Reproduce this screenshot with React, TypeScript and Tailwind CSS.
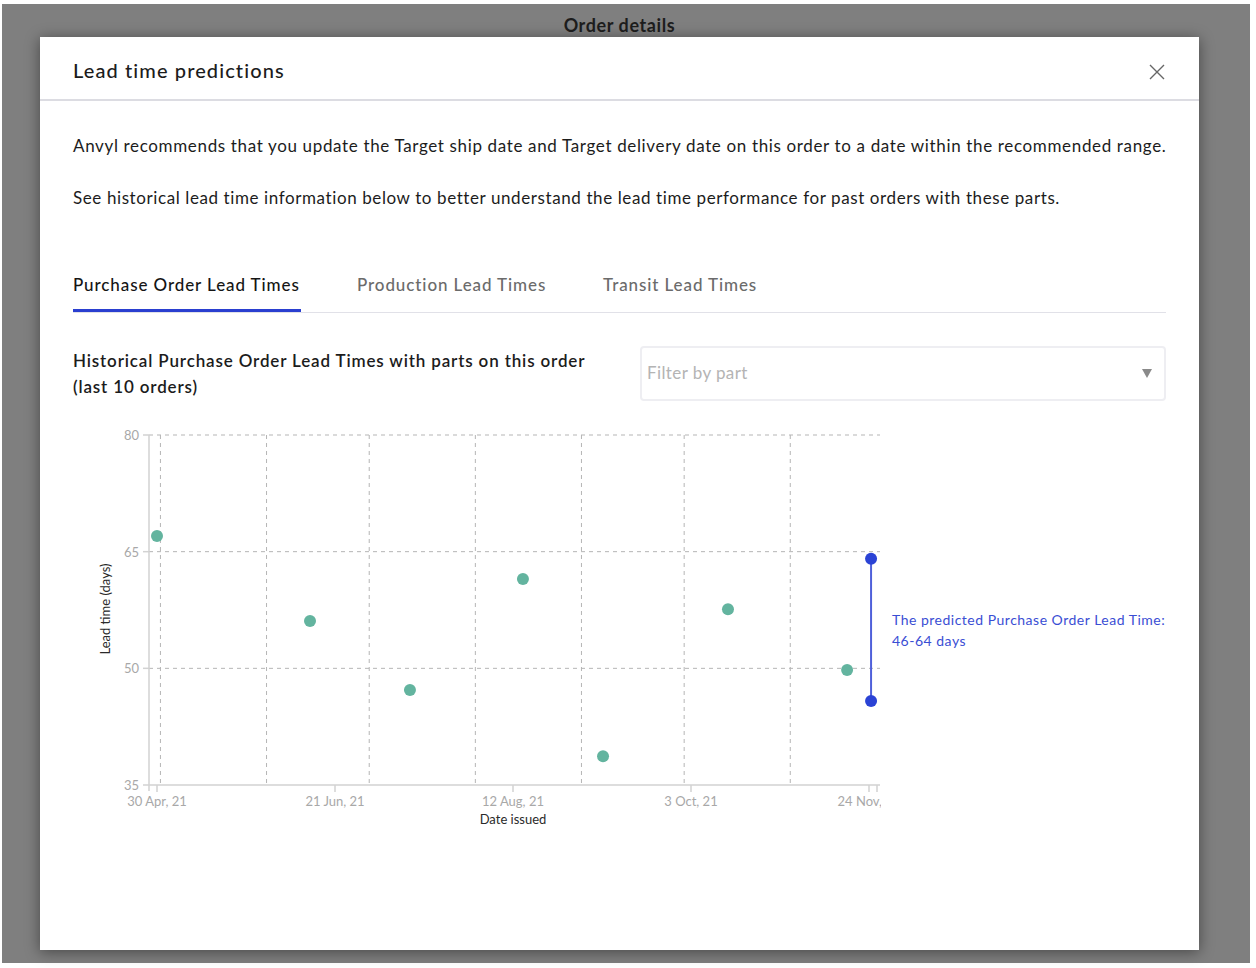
import React from "react";

// Historical purchase order lead times, in days from 30 Apr 2021
const orders = [
  { day: 0, lead: 67 },
  { day: 44.7, lead: 56.1 },
  { day: 73.9, lead: 47.2 },
  { day: 106.9, lead: 61.5 },
  { day: 130.3, lead: 38.7 },
  { day: 166.8, lead: 57.6 },
  { day: 201.6, lead: 49.8 },
];

const xTicks = [
  { day: 0, label: "30 Apr, 21" },
  { day: 52, label: "21 Jun, 21" },
  { day: 104, label: "12 Aug, 21" },
  { day: 156, label: "3 Oct, 21" },
  { day: 208, label: "24 Nov, 21" },
];

// first day of each month
const monthLines = [1, 32, 62, 93, 124, 154, 185];
const yTicks = [80, 65, 50, 35];

const px = (day: number) => 157 + day * 3.4231;
const py = (lead: number) => 785 - (lead - 35) * (350 / 45);

const font = { fontFamily: "Lato, 'Noto Sans', sans-serif" };

function LeadTimeChart() {
  const prediction = { day: 208.6, min: 45.8, max: 64.1 };
  return (
    <div className="flex mt-[19px]">
      <svg width={808} height={410} viewBox="73 420 808 410" style={font}>
        {/* grid */}
        {yTicks.slice(0, 3).map((v) => (
          <line key={v} x1={149} x2={880} y1={py(v)} y2={py(v)} stroke="#b5b5b5" strokeDasharray="4 4" />
        ))}
        {monthLines.map((d) => (
          <line key={d} x1={px(d)} x2={px(d)} y1={435} y2={785} stroke="#b5b5b5" strokeDasharray="4 4" />
        ))}

        {/* axes */}
        <line x1={149} x2={149} y1={435} y2={791} stroke="#d2d2d2" strokeWidth={1.5} />
        <line x1={149} x2={880} y1={785} y2={785} stroke="#d2d2d2" strokeWidth={1.5} />
        {yTicks.map((v) => (
          <g key={v}>
            <line x1={143} x2={149} y1={py(v)} y2={py(v)} stroke="#d2d2d2" strokeWidth={1.5} />
            <text x={139} y={py(v)} textAnchor="end" dominantBaseline="central" fontSize={13} fill="#a8a8a8">
              {v}
            </text>
          </g>
        ))}
        {xTicks.map((t) => (
          <g key={t.label}>
            <line x1={px(t.day)} x2={px(t.day)} y1={785} y2={792} stroke="#d2d2d2" strokeWidth={1.5} />
            <text x={px(t.day)} y={801} textAnchor="middle" dominantBaseline="central" fontSize={13} fill="#a8a8a8">
              {t.label}
            </text>
          </g>
        ))}
        <line x1={877} x2={877} y1={785} y2={792} stroke="#d2d2d2" strokeWidth={1.5} />

        <text
          x={105}
          y={609}
          textAnchor="middle"
          dominantBaseline="central"
          fontSize={13}
          fill="#2a2a2a"
          transform="rotate(-90 105 609)"
        >
          Lead time (days)
        </text>
        <text x={513} y={819} textAnchor="middle" dominantBaseline="central" fontSize={13} fill="#2a2a2a">
          Date issued
        </text>

        {/* past orders */}
        {orders.map((o, i) => (
          <circle key={i} cx={px(o.day)} cy={py(o.lead)} r={6} fill="#63b49f" />
        ))}

        {/* predicted range */}
        <line
          x1={px(prediction.day)}
          x2={px(prediction.day)}
          y1={py(prediction.max)}
          y2={py(prediction.min)}
          stroke="#4f60da"
          strokeWidth={2}
        />
        <circle cx={px(prediction.day)} cy={py(prediction.max)} r={6} fill="#2b43d5" />
        <circle cx={px(prediction.day)} cy={py(prediction.min)} r={6} fill="#2b43d5" />
      </svg>
      <div className="ml-[11px] mt-[189px] text-[14px] leading-[21px] text-[#3a4ed4] whitespace-nowrap tracking-[0.5px]">
        <div>The predicted Purchase Order Lead Time:</div>
        <div>46-64 days</div>
      </div>
    </div>
  );
}

export default function App() {
  const tabs = [
    { label: "Purchase Order Lead Times", width: "w-[228px]", active: true },
    { label: "Production Lead Times", width: "w-[190px]", active: false },
    { label: "Transit Lead Times", width: "w-[160px]", active: false },
  ];

  return (
    <div className="h-[968px] bg-white pt-[4px] pl-[2px] pr-[6px]" style={font}>
      <div className="h-[959px] bg-[#7f7f7f] pl-[38px]">
        <div className="w-[1159px]">
          <div className="pt-[10px] text-center text-[18px] leading-[23px] font-bold text-[#1c1c1c] tracking-[0.6px]">
            Order details
          </div>

          <div className="h-[913px] bg-white shadow-[0_2px_14px_rgba(0,0,0,0.45)]">
            {/* header */}
            <div className="h-[64px] flex items-center justify-between pl-[33px] pr-[33px] border-b-2 border-[#dcdce2]">
              <h2 className="text-[20px] font-medium text-[#1c1c1c] tracking-[1.1px] pt-[3px]">Lead time predictions</h2>
              <button className="w-[18px] h-[18px] flex items-center justify-center mt-[7px]">
                <svg width="16" height="16" viewBox="0 0 16 16">
                  <path d="M1 1 L15 15 M15 1 L1 15" stroke="#666" strokeWidth="1.4" fill="none" />
                </svg>
              </button>
            </div>

            <div className="px-[33px]">
              <p className="pt-[33px] text-[17px] leading-[24px] text-[#1c1c1c] tracking-[0.65px] whitespace-nowrap">
                Anvyl recommends that you update the Target ship date and Target delivery date on this order to a date
                within the recommended range.
              </p>
              <p className="mt-[28px] text-[17px] leading-[24px] text-[#1c1c1c] tracking-[0.6px]">
                See historical lead time information below to better understand the lead time performance for past orders
                with these parts.
              </p>

              {/* tabs */}
              <div className="mt-[63px] flex border-b border-[#e1e1e8]">
                {tabs.map((t, i) => (
                  <div
                    key={t.label}
                    className={`${t.width} ${i > 0 ? "ml-[56px]" : ""} pb-[12px] text-[17px] leading-[24px] font-medium whitespace-nowrap tracking-[0.9px] border-b-[3px] ${
                      t.active ? "text-[#151515] border-[#2a3fd0]" : "text-[#6b6b6b] border-transparent"
                    }`}
                  >
                    {t.label}
                  </div>
                ))}
              </div>

              <div className="mt-[33px] flex justify-between items-start">
                <h3 className="w-[525px] pt-[2px] text-[17px] leading-[26px] font-semibold text-[#1c1c1c] tracking-[0.85px]">
                  Historical Purchase Order Lead Times with parts on this order (last 10 orders)
                </h3>
                <div className="w-[526px] h-[55px] border-2 border-[#eeeef2] rounded-[4px] flex items-center justify-between pl-[5px] pr-[12px]">
                  <span className="text-[17px] text-[#b4b4b4] tracking-[0.4px] -mt-[1px]">Filter by part</span>
                  <svg width="10" height="9" viewBox="0 0 10 9">
                    <path d="M0 0 H10 L5 9 Z" fill="#8a8a8a" />
                  </svg>
                </div>
              </div>

              <LeadTimeChart />
            </div>
          </div>
        </div>
      </div>
    </div>
  );
}
